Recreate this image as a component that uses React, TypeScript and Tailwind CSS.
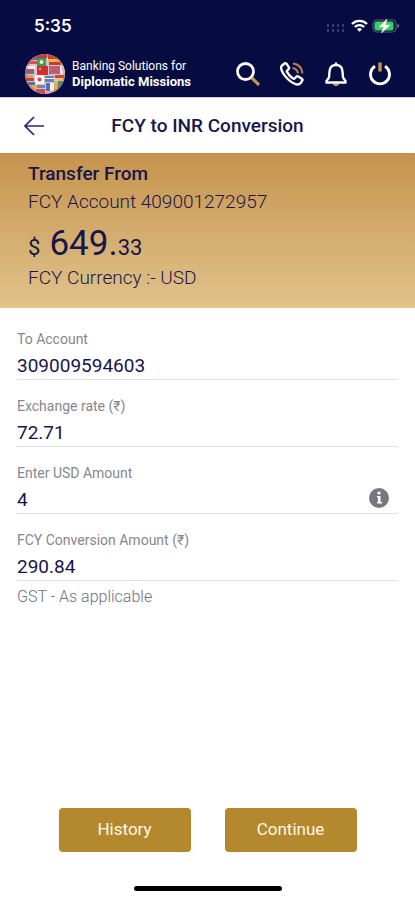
import { useState, type ReactNode } from "react";

function FlagGlobe() {
  return (
    <svg viewBox="0 0 40 40" className="h-10 w-10 shrink-0" aria-hidden="true">
      <defs>
        <clipPath id="globe">
          <circle cx="20" cy="20" r="20" />
        </clipPath>
      </defs>
      <g clipPath="url(#globe)">
        <rect width="40" height="40" fill="#dcc3c8" />
        <rect x="4" y="2" width="8" height="4" fill="#7b5d94" />
        <path d="M3 7h9v3H3z" fill="#d9534a" />
        <path d="M12 0h10v4H12z" fill="#c9343a" />
        <path d="M12 4h9v8h-9z" fill="#3f9a55" />
        <circle cx="16.500" cy="8" r="2" fill="#e8ecd0" />
        <path d="M23 1h9v4h-9z" fill="#d13c34" />
        <path d="M23 5h12v3H23z" fill="#e6bd4c" />
        <path d="M24 8h12v3H24z" fill="#c83c38" />
        <path d="M1 12h9v3H1z" fill="#f7f2ee" />
        <path d="M0 15h9v2H0z" fill="#d0494b" />
        <path d="M0 17h9v3H0z" fill="#5c77ad" />
        <path d="M12 12h11v9H12z" fill="#cf3035" />
        <path d="M14 14h2v2h-2z" fill="#edb84c" />
        <path d="M24 12h11v8H24z" fill="#d85b5e" />
        <path d="m24 12 11 8M35 12l-11 8" stroke="#8c6c9c" strokeWidth="1.500" />
        <path d="M35 11h5v9h-5z" fill="#eee7e9" />
        <path d="M1 21h7v3H1z" fill="#e0a04d" />
        <path d="M1 24h8v3H1z" fill="#b9454b" />
        <path d="M10 21h9v9h-9z" fill="#faf5f4" />
        <circle cx="14.500" cy="25.500" r="2" fill="#d5484b" />
        <path d="M20 22h9v6h-9z" fill="#6581ba" />
        <path d="M20 24h9v1h-9z" fill="#f2eef3" />
        <path d="M30 21h9v3h-9z" fill="#cc4448" />
        <path d="M30 24h9v3h-9z" fill="#e8c66c" />
        <path d="M3 28h7v3H3z" fill="#4f73a9" />
        <path d="M5 31h7v4H5z" fill="#e2b257" />
        <path d="M12 31h8v3h-8z" fill="#6e87bb" />
        <path d="M11 35h9v5h-9z" fill="#c94c51" />
        <path d="M21 29h4v8h-4z" fill="#526fb1" />
        <path d="M25 29h4v8h-4z" fill="#f4eded" />
        <path d="M29 28h4v8h-4z" fill="#e0ad49" />
        <path d="M33 27h5v8h-5z" fill="#4c8b76" />
        <circle cx="20" cy="20" r="19" fill="none" stroke="#b75d68" strokeOpacity="0.4" strokeWidth="2" />
      </g>
    </svg>
  );
}

function StatusIcons() {
  return (
    <div className="flex items-center gap-[7px]" aria-hidden="true">
      <svg viewBox="0 0 17 8" className="mt-1 h-2 w-[17px]" fill="#3a3e6b">
        {[0, 5, 10, 15].map((x) => (
          <g key={x}>
            <rect x={x} y="0" width="2" height="3" />
            <rect x={x} y="5" width="2" height="3" />
          </g>
        ))}
      </svg>
      <svg viewBox="0 0 17 13" className="h-[13px] w-[17px]" fill="none" stroke="#fff" strokeWidth="2.300">
        <path d="M1 5a10.600 10.600 0 0 1 15 0" />
        <path d="M3.800 8a6.700 6.700 0 0 1 9.400 0" />
        <path d="M8.500 12.800 5.900 10.200a3.700 3.700 0 0 1 5.200 0z" fill="#fff" stroke="none" />
      </svg>
      <svg viewBox="0 0 28 14" className="-ml-[3px] h-[14px] w-7">
        <rect x="1" y="1" width="23" height="12" rx="3.500" fill="none" stroke="#5d6184" />
        <path d="M25.500 5v4q1.500-.5 1.500-2t-1.500-2z" fill="#8c90a8" />
        <rect x="2.500" y="2.500" width="19" height="9" rx="2" fill="#38cf62" />
        <path d="M15 0 7 8h4.500L9.500 14l8.500-8h-4.500z" fill="#fff" stroke="#fff" strokeWidth="0.400" />
      </svg>
    </div>
  );
}

function ToolButton({ label, children }: { label: string; children: ReactNode }) {
  return (
    <button type="button" aria-label={label} className="flex h-11 w-11 items-center justify-center">
      <svg viewBox="0 0 24 24" className="h-6 w-6" fill="none" stroke="#fff" strokeWidth="2.400" strokeLinejoin="round">
        {children}
      </svg>
    </button>
  );
}

type FieldProps = {
  id: string;
  label: string;
  value: string;
  onChange?: (value: string) => void;
  children?: ReactNode;
};

function Field({ id, label, value, onChange, children }: FieldProps) {
  return (
    <div className="flex flex-col border-b border-[#dedee2] pt-4">
      <label htmlFor={id} className="text-sm leading-5 text-[#87878b]">
        {label}
      </label>
      <div className="flex h-[30px] items-center">
        <input
          id={id}
          value={value}
          readOnly={!onChange}
          onChange={(event) => onChange?.(event.target.value)}
          inputMode="decimal"
          className="h-full min-w-0 flex-1 bg-transparent pt-[2px] text-[19px] leading-6 text-[#17164c] outline-none"
        />
        {children}
      </div>
    </div>
  );
}

export default function App() {
  const [amount, setAmount] = useState("4");
  const rate = 72.71;
  const converted = (Number(amount) * rate || 0).toFixed(2);

  return (
    <div className="flex min-h-screen flex-col bg-white font-['Roboto','Noto_Sans',sans-serif] text-[#17164c]">
      <header className="border-b border-[#c9cbdc] bg-[#060b42] text-white">
        <div className="flex h-[51px] items-center justify-between pr-[15px] pl-[34px]">
          <time className="pt-[2px] font-['Inter','Roboto',sans-serif] text-[17px] font-semibold">5:35</time>
          <StatusIcons />
        </div>
        <div className="flex h-[46px] items-center justify-between pr-[13px] pl-[25px]">
          <div className="flex items-center gap-[7px]">
            <FlagGlobe />
            <p className="text-xs leading-4 whitespace-nowrap">
              <span className="block">Banking Solutions for</span>
              <strong className="block text-[13px] leading-4 font-bold">Diplomatic Missions</strong>
            </p>
          </div>
          <nav className="flex" aria-label="Tools">
            <ToolButton label="Search">
              <circle cx="9.500" cy="9.500" r="8" strokeWidth="2.800" />
              <path d="m16 16 7 7" stroke="#c8964a" strokeWidth="3.200" />
            </ToolButton>
            <ToolButton label="Call">
              <path d="M2 3.500 4.500 1.500q1.200-.8 2.100.4l2.200 3.200q.7 1.200-.3 2.100L7.300 8.500q-.8.7-.2 1.700 2.200 3.900 6 6.300 1 .6 1.700-.2l1.500-1.600q.9-.9 2-.2l3.500 2.200q1.200.9.4 2l-1.700 2.600q-1.300 1.500-3.900 1.100Q11.500 21.100 6.800 16 2.100 10.800 1.200 6.700.9 4.600 2 3.500z" />
              <path d="M13 1.500q8.500 1 9.500 10M12.500 6q4.800.6 5.500 5.500" stroke="#bd8058" strokeWidth="2" />
            </ToolButton>
            <ToolButton label="Notifications">
              <path d="M9 22h6l-1.500 1.500h-3z" fill="#c8964a" stroke="#c8964a" strokeWidth="1" />
              <path d="M12 .5v2.500M5.500 9.500Q6 3 12 3t6.500 6.500l.5 6 2.500 3.500v1.500h-19V19L5 15.500z" />
            </ToolButton>
            <ToolButton label="Log out">
              <path d="M7 4.300a9.500 9.500 0 1 0 10 0" strokeWidth="2.900" />
              <path d="M12 .5v9" stroke="#c8964a" strokeWidth="3.400" />
            </ToolButton>
          </nav>
        </div>
      </header>

      <div className="grid h-[55px] grid-cols-[64px_1fr_64px] items-center">
        <button type="button" aria-label="Back" className="flex h-11 items-center pl-6">
          <svg viewBox="0 0 20 20" className="h-5 w-5" fill="none" stroke="#29267f" strokeWidth="1.700">
            <path d="M10 1 1 10l9 9M1 10h19" />
          </svg>
        </button>
        <h1 className="text-center text-[19px] leading-7 font-medium whitespace-nowrap">FCY to INR Conversion</h1>
      </div>

      <section className="h-[155px] bg-linear-to-b from-[#c6934c] to-[#e0c38b] px-7 pt-[9px]">
        <h2 className="text-[19px] leading-6 font-medium">Transfer From</h2>
        <p className="pt-1 text-[19px] leading-6 font-light">FCY Account 409001272957</p>
        <p className="flex items-baseline pt-[10px]">
          <span className="text-[22px] leading-10">$</span>
          <span className="ml-[9px] text-[35px] leading-10">649.</span>
          <span className="text-[22px] leading-10">33</span>
        </p>
        <p className="text-[19px] leading-5 font-light">FCY Currency :- USD</p>
      </section>

      <form className="flex flex-1 flex-col" onSubmit={(event) => event.preventDefault()}>
        <div className="px-[17px] pt-[5px]">
          <Field id="account" label="To Account" value="309009594603" />
          <Field id="rate" label="Exchange rate (₹)" value={String(rate)} />
          <Field id="amount" label="Enter USD Amount" value={amount} onChange={setAmount}>
            <button type="button" aria-label="Amount information" className="mr-2">
              <svg viewBox="0 0 22 22" className="h-[22px] w-[22px]">
                <circle cx="11" cy="11" r="10" fill="#77777f" />
                <circle cx="11" cy="6" r="1.600" fill="#fff" />
                <path d="M9 9h3.500v6H14v1.500H9V15h1v-4.500H9z" fill="#fff" />
              </svg>
            </button>
          </Field>
          <Field id="converted" label="FCY Conversion Amount (₹)" value={converted} />
          <p className="pt-[6px] text-base leading-5 font-light text-[#707075]">GST - As applicable</p>
        </div>

        <div className="mt-auto flex justify-center gap-[34px]">
          <button type="button" className="h-11 w-[132px] rounded-[4px] bg-[#b4882c] text-[17px] text-[#fff8e8]">
            History
          </button>
          <button type="submit" className="h-11 w-[132px] rounded-[4px] bg-[#b4882c] text-[17px] text-[#fff8e8]">
            Continue
          </button>
        </div>
        <div className="mx-auto mt-[34px] mb-[9px] h-[5px] w-[148px] rounded-full bg-black" aria-hidden="true" />
      </form>
    </div>
  );
}
